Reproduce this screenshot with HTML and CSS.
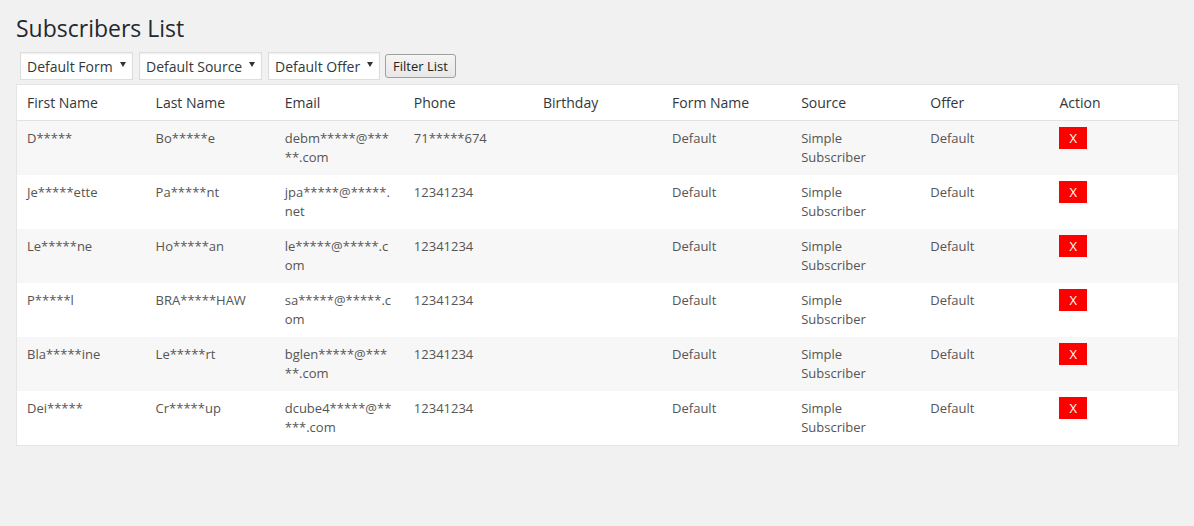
FILE: index.html
```html
<!DOCTYPE html>
<html>
<head>
<meta charset="utf-8">
<link rel="stylesheet" href="styles.css">
</head>
<body>
<div class="wrap">
  <h1 class="title">Subscribers List</h1>
  <div class="filters">
    <div class="select w1"><span>Default Form</span><span class="arrow"></span></div>
    <div class="select w2"><span>Default Source</span><span class="arrow"></span></div>
    <div class="select w3"><span>Default Offer</span><span class="arrow"></span></div>
    <button class="btn">Filter List</button>
  </div>
  <table class="list">
    <thead>
      <tr><th>First Name</th><th>Last Name</th><th>Email</th><th>Phone</th><th>Birthday</th><th>Form Name</th><th>Source</th><th>Offer</th><th>Action</th></tr>
    </thead>
    <tbody>
      <tr class="alt"><td>D*****</td><td>Bo*****e</td><td>debm*****@*****.com</td><td>71*****674</td><td></td><td>Default</td><td><span class="src">Simple Subscriber</span></td><td>Default</td><td><span class="del">X</span></td></tr>
      <tr><td>Je*****ette</td><td>Pa*****nt</td><td>jpa*****@*****.net</td><td>12341234</td><td></td><td>Default</td><td><span class="src">Simple Subscriber</span></td><td>Default</td><td><span class="del">X</span></td></tr>
      <tr class="alt"><td>Le*****ne</td><td>Ho*****an</td><td>le*****@*****.com</td><td>12341234</td><td></td><td>Default</td><td><span class="src">Simple Subscriber</span></td><td>Default</td><td><span class="del">X</span></td></tr>
      <tr><td>P*****l</td><td>BRA*****HAW</td><td>sa*****@*****.com</td><td>12341234</td><td></td><td>Default</td><td><span class="src">Simple Subscriber</span></td><td>Default</td><td><span class="del">X</span></td></tr>
      <tr class="alt"><td>Bla*****ine</td><td>Le*****rt</td><td>bglen*****@*****.com</td><td>12341234</td><td></td><td>Default</td><td><span class="src">Simple Subscriber</span></td><td>Default</td><td><span class="del">X</span></td></tr>
      <tr><td>Dei*****</td><td>Cr*****up</td><td>dcube4*****@*****.com</td><td>12341234</td><td></td><td>Default</td><td><span class="src">Simple Subscriber</span></td><td>Default</td><td><span class="del">X</span></td></tr>
    </tbody>
  </table>
</div>
</body>
</html>
```
FILE: styles.css
```css
html, body {
  margin: 0;
  padding: 0;
  background: #f1f1f1;
}
body {
  font-family: "Open Sans", sans-serif;
  color: #444;
}
.wrap {
  padding: 0 15px 0 16px;
}
.title {
  margin: 0;
  padding: 13px 0 8px;
  font-size: 23px;
  line-height: 31px;
  font-weight: 400;
  color: #23282d;
}
.filters {
  display: flex;
  align-items: center;
  gap: 6px;
  margin: 0 0 4px 4px;
  height: 28px;
}
.select {
  box-sizing: border-box;
  height: 28px;
  display: flex;
  align-items: center;
  justify-content: space-between;
  padding: 0 6px 0 6px;
  background: #fff;
  border: 1px solid #ddd;
  box-shadow: inset 0 1px 2px rgba(0,0,0,.07);
  font-size: 14px;
  color: #32373c;
}
.w1 { width: 113px; }
.w2 { width: 123px; }
.w3 { width: 112px; }
.arrow {
  width: 0;
  height: 0;
  border-left: 3px solid transparent;
  border-right: 3px solid transparent;
  border-top: 5px solid #333;
  margin-top: -3px;
}
.btn {
  box-sizing: border-box;
  height: 24px;
  width: 71px;
  margin-left: -1px;
  padding: 0;
  font-family: "Open Sans", sans-serif;
  font-size: 13px;
  color: #222;
  background: linear-gradient(#f5f5f5, #e7e7e7);
  border: 1px solid #a0a0a0;
  border-radius: 3px;
}
.list {
  width: 100%;
  table-layout: fixed;
  border-collapse: collapse;
  background: #fff;
  border: 1px solid #e5e5e5;
  box-shadow: 0 1px 1px rgba(0,0,0,.04);
}
.list th {
  text-align: left;
  font-weight: 400;
  font-size: 14px;
  line-height: 19px;
  padding: 8px 10px;
  color: #32373c;
  border-bottom: 1px solid #e1e1e1;
}
.list td {
  vertical-align: top;
  font-size: 13px;
  line-height: 19px;
  padding: 8px 10px;
  color: #555;
  overflow-wrap: anywhere;
}
.list tr.alt td {
  background: #f7f7f7;
}
.src {
  display: block;
  max-width: 100px;
}
.del {
  display: block;
  width: 28px;
  height: 22px;
  margin-top: -2px;
  background: #ff0000;
  color: #fff;
  text-align: center;
  line-height: 22px;
  font-size: 13px;
}
```
